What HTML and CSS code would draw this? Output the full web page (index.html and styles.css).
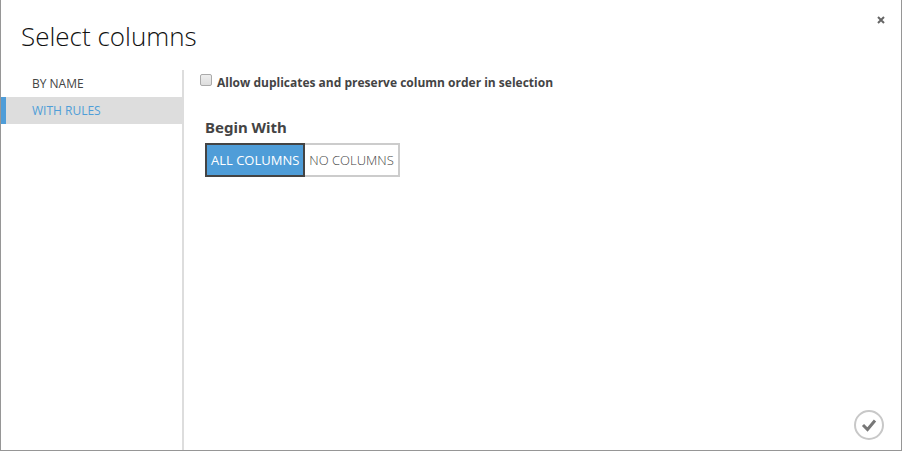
FILE: index.html
```html
<!DOCTYPE html>
<html lang="en">
<head>
<meta charset="utf-8">
<title>Select columns</title>
<link rel="stylesheet" href="styles.css">
</head>
<body>
<main class="dialog">
  <header class="header">
    <h1 class="title">Select columns</h1>
    <button class="close" type="button" aria-label="Close">
      <svg width="8" height="8" viewBox="0 0 8 8"><path d="M1 1L7 7M7 1L1 7" stroke="#666" stroke-width="2"/></svg>
    </button>
  </header>
  <div class="body">
    <nav class="tabs">
      <a class="tab" href="#name">BY NAME</a>
      <a class="tab active" href="#rules">WITH RULES</a>
    </nav>
    <section class="content">
      <div class="option">
        <input class="check" type="checkbox" id="dup">
        <label for="dup">Allow duplicates and preserve column order in selection</label>
      </div>
      <h2 class="subtitle">Begin With</h2>
      <div class="toggle">
        <button class="choice selected" type="button">ALL COLUMNS</button>
        <button class="choice" type="button">NO COLUMNS</button>
      </div>
    </section>
    <button class="confirm" type="button" aria-label="OK">
      <svg width="32" height="32" viewBox="0 0 32 32" fill="none"><circle cx="16" cy="16" r="14" stroke="#c8c8c8" stroke-width="2"/><path d="M10 16L14.500 20.500L22 11.500" stroke="#777" stroke-width="3"/></svg>
    </button>
  </div>
</main>
</body>
</html>
```
FILE: styles.css
```css
* { box-sizing: border-box; }
body {
  margin: 0;
  font-family: "Open Sans", "Noto Sans", sans-serif;
  font-size: 12px;
  color: #444;
}
button { font: inherit; color: inherit; background: none; border: 0; padding: 0; }
.dialog {
  display: flex;
  flex-direction: column;
  min-height: 100vh;
  background: #fff;
  border: 1px solid #969696;
  border-top: 0;
}
.header {
  display: flex;
  justify-content: space-between;
  align-items: flex-start;
  height: 70px;
  padding: 16px 16px 0 20px;
}
.title {
  margin: 0;
  font-size: 26px;
  line-height: 40px;
  font-weight: 300;
  color: #111;
}
.close { display: flex; }
.close svg { display: block; }
.body { display: flex; flex: 1; }
.tabs {
  width: 183px;
  border-right: 2px solid #ddd;
}
.tab {
  display: block;
  height: 27px;
  line-height: 27px;
  padding-left: 26px;
  border-left: 5px solid transparent;
  color: #444;
  text-decoration: none;
}
.tab.active {
  background: #ddd;
  border-left-color: #4f9dd8;
  color: #4f9dd8;
}
.content { flex: 1; padding: 4px 16px 0; }
.option {
  display: flex;
  align-items: flex-start;
  gap: 5px;
  line-height: 18px;
  font-weight: 700;
}
.check {
  appearance: none;
  width: 12px;
  height: 12px;
  margin: 0;
  border: 1px solid #aaa;
  border-radius: 2px;
  background: linear-gradient(#eee, #ddd);
}
.check:checked { background: #4f9dd8; }
.subtitle {
  margin: 25px 0 6px 5px;
  font-family: "Noto Sans", "Open Sans", sans-serif;
  font-size: 15px;
  line-height: 20px;
  font-weight: 700;
}
.toggle { display: flex; margin-left: 5px; }
.choice {
  height: 34px;
  padding: 0 4px;
  border: 2px solid #ccc;
  font-size: 13px;
  font-weight: 300;
}
.choice + .choice { border-left: 0; }
.choice.selected {
  background: #4f9dd8;
  border-color: #444;
  color: #fff;
  font-weight: 400;
}
.confirm { display: flex; align-self: flex-end; margin: 0 16px 9px 0; }
```
